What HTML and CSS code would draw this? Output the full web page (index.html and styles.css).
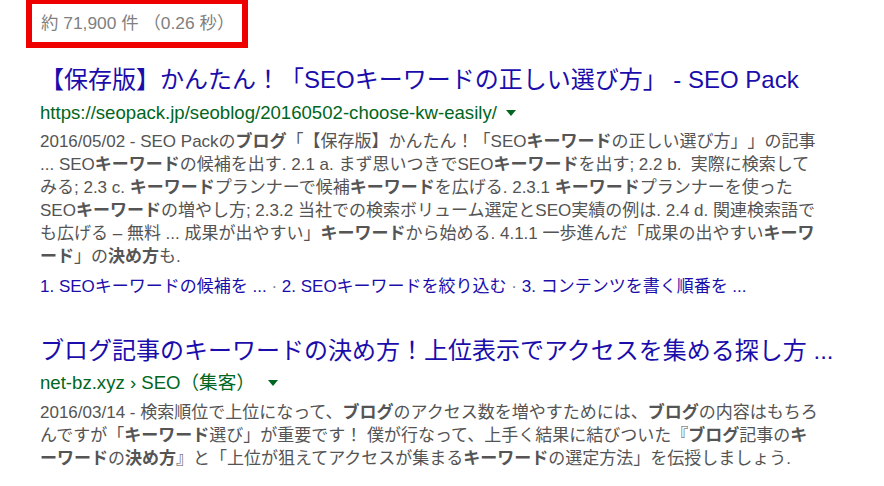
FILE: index.html
```html
<!DOCTYPE html>
<html lang="ja">
<head>
<meta charset="utf-8">
<link rel="stylesheet" href="styles.css">
</head>
<body>
<div class="page">
  <div class="stats">約 71,900 件 （0.26 秒）</div>

  <div class="result first">
    <h3 class="title">【保存版】かんたん！「SEOキーワードの正しい選び方」 - SEO Pack</h3>
    <div class="url">https://seopack.jp/seoblog/20160502-choose-kw-easily/<span class="caret"></span></div>
    <div class="snippet">2016/05/02 - SEO Pack<span class="jp">の</span><b>ブログ</b>「【保存版】かんたん！「SEO<b>キーワード</b>の正しい選び方」」の記事<br>... SEO<b>キーワード</b>の候補を出す. 2.1 a. まず思いつきでSEO<b>キーワード</b>を出す; 2.2 b.&nbsp; 実際に検索して<br>みる; 2.3 c. <b>キーワード</b>プランナーで候補<b>キーワード</b>を広げる. 2.3.1 <b>キーワード</b>プランナーを使った<br>SEO<b>キーワード</b>の増やし方; 2.3.2 当社での検索ボリューム選定とSEO実績の例は. 2.4 d. 関連検索語で<br>も広げる – 無料 ... 成果が出やすい」<b>キーワード</b>から始める. 4.1.1 一歩進んだ「成果の出やすい<b>キーワ</b><br><b>ード</b>」の<b>決め方</b>も.</div>
    <div class="sitelinks"><span class="link">1. SEOキーワードの候補を ...</span><span class="sep"> · </span><span class="link">2. SEOキーワードを絞り込む</span><span class="sep"> · </span><span class="link">3. コンテンツを書く順番を ...</span></div>
  </div>

  <div class="result second">
    <h3 class="title">ブログ記事のキーワードの決め方！上位表示でアクセスを集める探し方 ...</h3>
    <div class="url">net-bz.xyz › SEO（集客）<span class="caret wide"></span></div>
    <div class="snippet">2016/03/14 - 検索順位で上位になって、<b>ブログ</b>のアクセス数を増やすためには、<b>ブログ</b>の内容はもちろ<br>んですが「<b>キーワード</b>選び」が重要です！ 僕が行なって、上手く結果に結びついた『<b>ブログ</b>記事の<b>キ</b><br><b>ーワード</b>の<b>決め方</b>』と「上位が狙えてアクセスが集まる<b>キーワード</b>の選定方法」を伝授しましょう.</div>
  </div>
</div>
</body>
</html>
```

FILE: styles.css
```css
html, body {
  margin: 0;
  padding: 0;
  background: #ffffff;
}

body {
  font-family: "Liberation Sans", Arial, "Noto Sans CJK JP", sans-serif;
  text-spacing-trim: space-all;
}

.page {
  width: 884px;
  height: 486px;
  overflow: hidden;
  padding-left: 40px;
  box-sizing: border-box;
}

.stats {
  margin-left: -14px;
  width: 222px;
  box-sizing: border-box;
  border: 6px solid #ee0000;
  border-top-width: 4px;
  padding-left: 9px;
  font-size: 17.4px;
  line-height: 38px;
  color: #808080;
  white-space: nowrap;
}

.result {
  white-space: nowrap;
}

.first {
  margin-top: 17px;
}

.second {
  margin-top: 38px;
}

.title {
  margin: 0;
  font-weight: normal;
  font-size: 24px;
  line-height: 30px;
  color: #1a0dab;
}

.url {
  margin-top: 6px;
  font-size: 18.6px;
  line-height: 24px;
  color: #006621;
}

.second .url {
  margin-top: 5px;
}

.caret {
  display: inline-block;
  width: 0;
  height: 0;
  margin-left: 9px;
  vertical-align: 3px;
  border-left: 5px solid transparent;
  border-right: 5px solid transparent;
  border-top: 6px solid #006621;
}

.caret.wide {
  margin-left: 13px;
}

.snippet {
  margin-top: 5px;
  font-size: 17px;
  line-height: 23px;
  color: #545454;
}

.second .snippet {
  margin-top: 6px;
}

.snippet b {
  font-weight: bold;
  color: #555555;
}

.sitelinks {
  margin-top: 7px;
  font-size: 17px;
  line-height: 23px;
  color: #1a0dab;
}

.sitelinks .sep {
  color: #808080;
}
```
